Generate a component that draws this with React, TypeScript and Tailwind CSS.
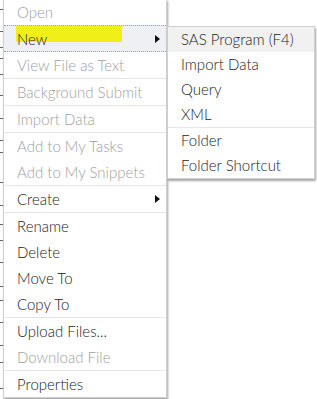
import React from "react";

type Item = { label: string; disabled?: boolean; arrow?: boolean; sepBefore?: boolean; special?: "first" | "new" };

const mainItems: Item[] = [
  { label: "Open", disabled: true, special: "first" },
  { label: "New", arrow: true, special: "new" },
  { label: "View File as Text", disabled: true },
  { label: "Background Submit", disabled: true, sepBefore: true },
  { label: "Import Data", disabled: true, sepBefore: true },
  { label: "Add to My Tasks", disabled: true, sepBefore: true },
  { label: "Add to My Snippets", disabled: true },
  { label: "Create", arrow: true, sepBefore: true },
  { label: "Rename", sepBefore: true },
  { label: "Delete" },
  { label: "Move To" },
  { label: "Copy To" },
  { label: "Upload Files...", sepBefore: true },
  { label: "Download File", disabled: true },
  { label: "Properties", sepBefore: true },
];

const subItems: Item[] = [
  { label: "SAS Program (F4)", special: "new" },
  { label: "Import Data" },
  { label: "Query" },
  { label: "XML" },
  { label: "Folder", sepBefore: true },
  { label: "Folder Shortcut" },
];

function Arrow() {
  return (
    <svg width="5" height="8" viewBox="0 0 5 8" className="absolute right-[6px] top-1/2 -translate-y-1/2">
      <path d="M0 0 L5 4 L0 8 Z" fill="#111" />
    </svg>
  );
}

const ticks = [9, 31, 47, 58, 74, 95, 118, 140, 152, 182, 205, 224, 240, 262, 286, 300, 322, 345, 362, 388];

export default function App() {
  return (
    <div
      className="relative w-[317px] h-[399px] overflow-hidden bg-white"
      style={{ fontFamily: "Lato, 'Open Sans', sans-serif" }}
    >
      {ticks.map((t) => (
        <div key={t} className="absolute left-0 w-[3px] h-[1px] bg-[#666]" style={{ top: t }} />
      ))}

      {/* main menu */}
      <div className="absolute left-[3px] top-[-1px] w-[164px] border border-[#cfcfcf] bg-white shadow-[1px_2px_2px_rgba(0,0,0,0.35)] flex flex-col font-light">
        {mainItems.map((it) => (
          <React.Fragment key={it.label}>
            {it.sepBefore && <div className="h-[1px] bg-[#e6e6e6]" />}
            {it.special === "new" ? (
              <div className="relative h-[27px] border-y border-dotted border-[#8e9cb0] bg-[#eef0f4] flex items-center pl-[13px] text-[15px] text-[#222]">
                <div className="absolute left-[12px] top-0 w-[106px] h-[16px] bg-[#f0f018]" />
                <span className="relative top-[1px]">{it.label}</span>
                {it.arrow && <Arrow />}
              </div>
            ) : (
              <div
                className={
                  "relative flex items-center pl-[13px] text-[15px] " +
                  (it.special === "first" ? "h-[25px] " : "h-[26px] ") +
                  (it.disabled ? "text-[#a0a0a0]" : "text-[#222]")
                }
              >
                <span>{it.label}</span>
                {it.arrow && <Arrow />}
              </div>
            )}
          </React.Fragment>
        ))}
      </div>

      {/* sub menu */}
      <div className="absolute left-[167px] top-[26px] w-[148px] border border-[#cfcfcf] bg-white shadow-[1px_2px_2px_rgba(0,0,0,0.35)] flex flex-col font-light">
        {subItems.map((it) => (
          <React.Fragment key={it.label}>
            {it.sepBefore && <div className="h-[1px] bg-[#e6e6e6]" />}
            <div
              className={
                "flex items-center h-[25px] pl-[13px] text-[15px] text-[#222] " +
                (it.special === "new" ? "bg-[#f1f1f1]" : "")
              }
            >
              {it.label}
            </div>
          </React.Fragment>
        ))}
      </div>
    </div>
  );
}
